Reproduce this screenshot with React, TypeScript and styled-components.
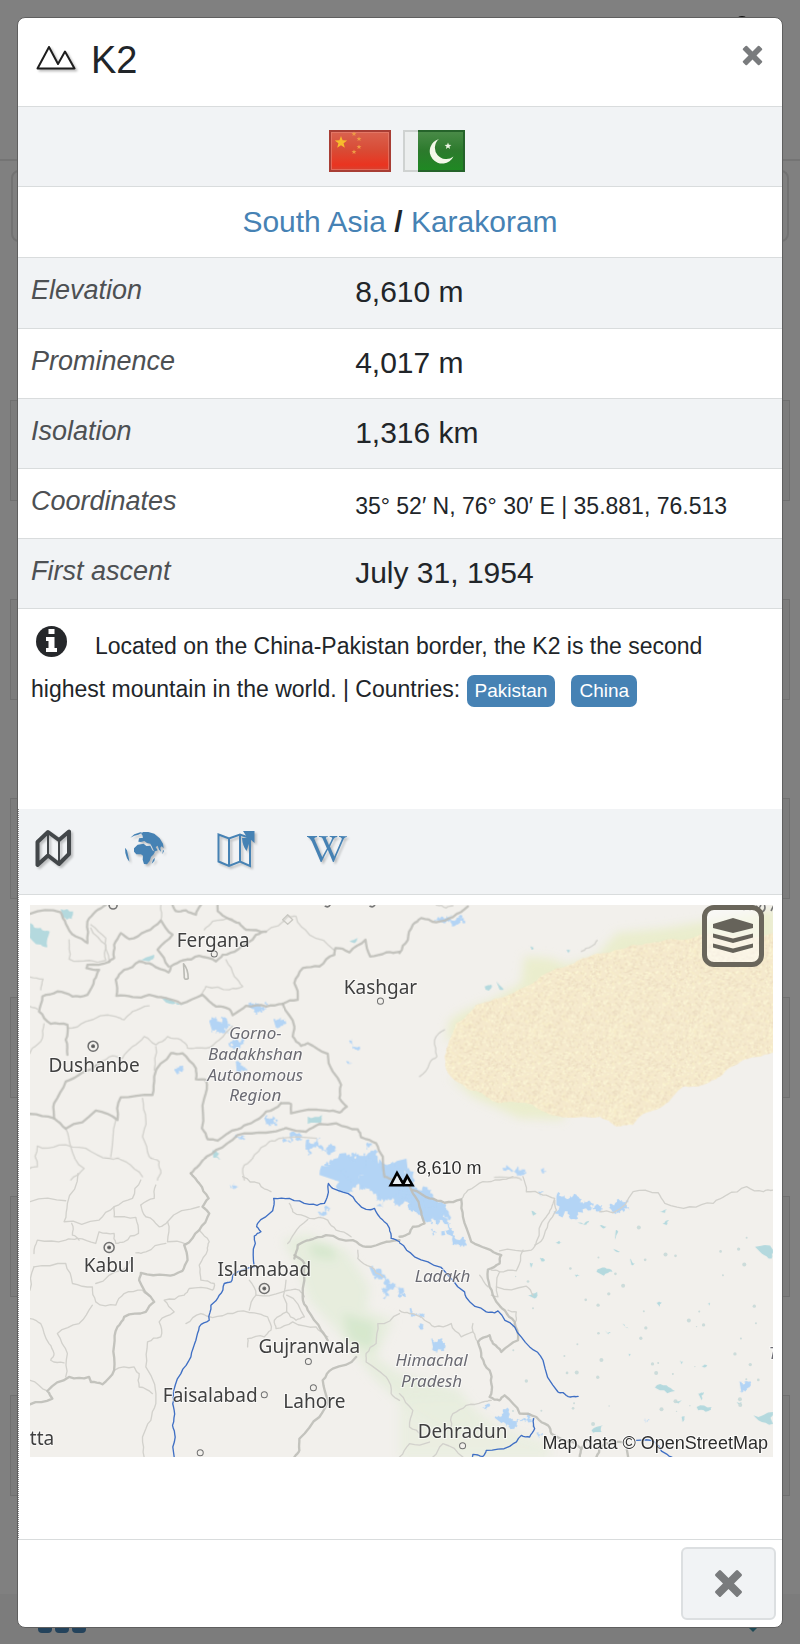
import React from "react";
import styled, { createGlobalStyle, css } from "styled-components";
import { FaWikipediaW } from "react-icons/fa";

const sans = `"Liberation Sans", Arial, sans-serif`;
const mapFont = `"Noto Sans", "Open Sans", sans-serif`;
const color = {
  ink: "#212529",
  muted: "#4d5053",
  link: "#4682b4",
  line: "#d9dcdd",
  stripe: "#f1f3f5",
  cross: "#797b7d",
};

const GlobalStyle = createGlobalStyle`
  *, *::before, *::after { box-sizing: border-box; }
  body { margin: 0; background: #808080; font-family: ${sans}; color: ${color.ink}; }
  a { color: ${color.link}; text-decoration: none; }
  button { font: inherit; cursor: pointer; }
`;

/* ---------- page behind the dialog ---------- */

const Stage = styled.div`
  display: grid;
  grid-template-columns: minmax(0, 1fr);
  min-height: 100vh;
`;

const Behind = styled.div`
  grid-area: 1 / 1;
  display: flex;
  flex-direction: column;
  overflow: hidden;
`;

const BehindBar = styled.div`
  display: flex;
  justify-content: flex-end;
  height: 161px;
  flex: none;
  padding: 15px 54px 0 0;
  border-bottom: 2px solid #747474;
`;

const BehindSearch = styled.div`
  height: 72px;
  flex: none;
  margin: 9px 11px 158px;
  border: 2px solid #727272;
  border-radius: 8px;
`;

const BehindCard = styled.div`
  height: 101px;
  flex: none;
  margin: 0 10px 98px;
  border: 1px solid #707070;
  background: #7c7c7c;
`;

const BehindDock = styled.div`
  display: flex;
  justify-content: space-between;
  align-items: flex-end;
  flex: 1;
  padding: 0 40px 12px 38px;
  background: #7c7c7c;
`;

/* ---------- dialog ---------- */

const Dialog = styled.main`
  grid-area: 1 / 1;
  position: relative;
  display: flex;
  flex-direction: column;
  align-self: start;
  margin: 17px;
  border: 1px solid #5f5f5f;
  border-radius: 8px;
  background: #fff;
  overflow: hidden;
`;

const Header = styled.header`
  display: flex;
  align-items: flex-start;
  padding: 19px 14px 0 18px;
  height: 89px;
  border-bottom: 1px solid ${color.line};
`;

const Title = styled.h1`
  flex: 1;
  margin: 0;
  padding-left: 15px;
  font-size: 38px;
  line-height: 46px;
  font-weight: 400;
`;

const HeaderIcon = styled.div`
  padding-top: 8px;
  line-height: 0;
  filter: drop-shadow(2px 2px 1px rgba(0, 0, 0, 0.25));
`;

const CloseButton = styled.button<{ $large?: boolean }>`
  display: grid;
  place-items: center;
  padding: 0;
  border: 0;
  background: none;
  width: 32px;
  height: 36px;
  color: ${color.cross};
  ${(p) =>
    p.$large &&
    css`
      width: 95px;
      height: 73px;
      border: 2px solid #dcdfe1;
      border-radius: 6px;
      background: ${color.stripe};
    `}
`;

const Flags = styled.div`
  display: flex;
  justify-content: center;
  gap: 11px;
  height: 80px;
  padding: 23px 5px 0 0;
  background: ${color.stripe};
  border-bottom: 1px solid ${color.line};
`;

const Region = styled.h2`
  margin: 0;
  padding: 17px 0;
  font-size: 30px;
  line-height: 36px;
  font-weight: 400;
  text-align: center;
  border-bottom: 1px solid ${color.line};
`;

const Facts = styled.table`
  width: 100%;
  table-layout: fixed;
  border-collapse: collapse;
`;

const FactRow = styled.tr`
  height: 70px;
  border-bottom: 1px solid ${color.line};
  &:nth-child(odd) {
    background: ${color.stripe};
  }
`;

const FactLabel = styled.th`
  width: 44%;
  padding: 16px 0 0 13px;
  vertical-align: top;
  text-align: left;
  font-size: 27px;
  line-height: 32px;
  font-weight: 400;
  font-style: italic;
  color: ${color.muted};
`;

const FactValue = styled.td<{ $small?: boolean }>`
  padding: 16px 0 0 1px;
  vertical-align: top;
  font-size: ${(p) => (p.$small ? 23 : 30)}px;
  line-height: ${(p) => (p.$small ? 42 : 36)}px;
  white-space: nowrap;
`;

const About = styled.p`
  margin: 0;
  min-height: 200px;
  padding: 16px 12px 0 13px;
  font-size: 23px;
  line-height: 43px;
`;

const AboutIcon = styled.svg`
  width: 31px;
  height: 31px;
  margin: 0 28px 0 5px;
  vertical-align: -3px;
`;

const Badge = styled.a`
  display: inline-block;
  margin-right: 16px;
  padding: 0 8px;
  border-radius: 7px;
  background: ${color.link};
  color: #fff;
  font-size: 19px;
  line-height: 32px;
`;

const Maps = styled.section`
  border-left: 1px dotted #8d8d8d;
  border-bottom: 1px solid ${color.line};
`;

const Tabs = styled.nav`
  display: flex;
  gap: 46px;
  height: 86px;
  padding: 16px 0 0 12px;
  background: ${color.stripe};
  border-bottom: 1px solid ${color.line};
`;

const Tab = styled.button<{ $active?: boolean }>`
  display: grid;
  place-items: center;
  width: 45px;
  height: 48px;
  padding: 0;
  border: 0;
  background: none;
  color: ${(p) => (p.$active ? "#43474a" : color.link)};
  filter: drop-shadow(2px 2px 1px rgba(0, 0, 0, 0.22));
`;

const MapFrame = styled.div`
  position: relative;
  margin: 10px 9px 82px 11px;
`;

const MapCanvas = styled.svg`
  display: block;
  width: 100%;
  height: auto;
  background: #f2f0ec;
`;

const LayersButton = styled.button`
  position: absolute;
  top: 0;
  right: 9px;
  display: grid;
  place-items: center;
  width: 62px;
  height: 62px;
  padding: 0;
  border: 5px solid #6a665b;
  border-radius: 12px;
  background: rgba(255, 255, 255, 0.5);
  color: #66635a;
`;

const City = styled.text`
  font: 19px ${mapFont};
  fill: #404040;
  text-anchor: middle;
  paint-order: stroke;
  stroke: rgba(255, 255, 255, 0.6);
  stroke-width: 2px;
`;

const Area = styled(City)`
  font: italic 17px ${mapFont};
  fill: #6a6a72;
`;

const MapNote = styled.text`
  font: 18px ${sans};
  fill: #2c2c2c;
  paint-order: stroke;
  stroke: rgba(255, 255, 255, 0.7);
  stroke-width: 2px;
`;

const Footer = styled.footer`
  display: flex;
  justify-content: flex-end;
  padding: 7px 6px;
`;

/* ---------- icons ---------- */

const Cross = ({ size }: { size: number }) => (
  <svg width={size} height={size} viewBox="0 0 20 20" aria-hidden="true">
    <path
      d="M3.4 1 1 3.4Q.3 4.100 1 4.800L6.200 10 1 15.200Q.3 15.900 1 16.600L3.400 19Q4.100 19.700 4.800 19L10 13.800 15.200 19Q15.900 19.700 16.600 19L19 16.600Q19.700 15.900 19 15.200L13.800 10 19 4.800Q19.700 4.100 19 3.400L16.600 1Q15.900.3 15.200 1L10 6.200 4.800 1Q4.100.3 3.400 1Z"
      fill="currentColor"
    />
  </svg>
);

const Peaks = () => (
  <svg width="40" height="25" viewBox="0 0 40 25" fill="#fff" stroke="#1d1d1d" strokeWidth="2" strokeLinejoin="round" aria-hidden="true">
    <path d="M1.500 23.500 13 2l9 17 7-12.500 9.500 17Z" />
  </svg>
);

const Info = () => (
  <AboutIcon viewBox="0 0 31 31" aria-hidden="true">
    <circle cx="15.500" cy="15.500" r="15.500" fill="#26282b" />
    <path d="M12.500 3h6v5h-6ZM10 11h8.500v11h2.500v4H10v-4h2.500v-7H10Z" fill="#fff" />
  </AboutIcon>
);

const FoldedMap = () => (
  <svg width="37" height="39" viewBox="0 0 37 39" fill="none" stroke="currentColor" aria-hidden="true">
    <path d="M2.500 13 13 3l11 8L34 2.500V25L24 35 13 26.500 2.500 36Z" strokeWidth="4" strokeLinejoin="round" />
    <path d="M13 3v23M24 11v24" strokeWidth="2" />
  </svg>
);

const Globe = () => (
  <svg width="40" height="36" viewBox="0 0 120 108" fill="currentColor" aria-hidden="true">
    <path d="M27 52 38 41 56 38 64 45 76 44 82 58 90 62 86 70 78 78 74 90 66 100 57 99 53 86 54 74 48 70 34 70 27 62Z" />
    <path d="M40 32 42 22 54 20 52 12 48 8 54 3 70 3 88 8 104 22 114 38 116 52 110 46 106 50 108 62 102 56 98 44 92 48 98 58 88 62 80 46 76 38 66 36 58 30 48 33Z" />
    <path d="M16 20 28 10 46 4 52 5 40 11 28 14ZM0 50 6 58 12 84 13 92 6 82 1 66ZM90 80 88 90 80 98 84 86ZM114 56 117 60 112 70Z" />
  </svg>
);

const FlaggedMap = () => (
  <svg width="38" height="38" viewBox="0 0 38 38" fill="none" stroke="currentColor" strokeWidth="2" aria-hidden="true">
    <path d="M1.500 4.500 12 8.500 23 4.500 33 8V36L23 31.500 12 36 1.500 31.500ZM12 8.500V36M23 4.500v27" />
    <path d="M26 1h11.500v12L33.500 9.500Q32 14 29.500 21 25.500 16 25 8h5.500Z" fill="currentColor" stroke="none" />
  </svg>
);

const Layers = () => (
  <svg width="40" height="36" viewBox="0 0 40 36" fill="currentColor" aria-hidden="true">
    <path d="M0 6 20 0 40 6v4L20 15 0 10ZM0 15.500 20 20.500 40 15.500v4L20 25 0 19.500ZM0 25.500 20 30.500 40 25.500v4L20 35 0 29.500Z" />
  </svg>
);

const star = (cx: number, cy: number, r: number) =>
  Array.from({ length: 10 }, (_, i) => {
    const a = (Math.PI / 5) * i - Math.PI / 2;
    const q = i % 2 ? r * 0.42 : r;
    return `${(cx + q * Math.cos(a)).toFixed(2)},${(cy + q * Math.sin(a)).toFixed(2)}`;
  }).join(" ");

const ChinaFlag = () => (
  <svg width="63" height="42" viewBox="0 0 63 42" role="img" aria-label="China">
    <defs>
      <linearGradient id="red" x1="0" y1="0" x2="0" y2="1">
        <stop offset="0" stopColor="#d96350" />
        <stop offset=".5" stopColor="#d94a34" />
        <stop offset=".85" stopColor="#ea3420" />
        <stop offset="1" stopColor="#d24433" />
      </linearGradient>
    </defs>
    <rect x="1" y="1" width="60" height="40" fill="url(#red)" stroke="#a83d34" strokeWidth="2" />
    <rect x="2.500" y="2.500" width="57" height="37" fill="none" stroke="#e98576" strokeOpacity=".6" />
    <polygon points={star(12, 12.5, 6.5)} fill="#f7bb2c" />
    {[[25, 4], [30, 9], [30, 17], [25, 22]].map(([x, y]) => (
      <polygon key={y} points={star(x, y, 2.6)} fill="#ee9a45" />
    ))}
  </svg>
);

const PakistanFlag = () => (
  <svg width="63" height="42" viewBox="0 0 63 42" role="img" aria-label="Pakistan">
    <defs>
      <linearGradient id="green" x1="0" y1="0" x2="0" y2="1">
        <stop offset="0" stopColor="#4c8c4a" />
        <stop offset=".5" stopColor="#2c7a2c" />
        <stop offset="1" stopColor="#1e8a22" />
      </linearGradient>
    </defs>
    <rect x="1" y="1" width="60" height="40" fill="#eceeee" stroke="#cfd2d1" strokeWidth="2" />
    <rect x="15" y="0" width="47" height="42" fill="url(#green)" />
    <path d="M15 1H61V41H15" fill="none" stroke="#25632a" strokeWidth="2" />
    <path d="M36 9a12.500 12.500 0 1 0 14.500 17.500A11 11 0 0 1 36 9Z" fill="#f3f8e8" />
    <polygon points={star(45, 16, 3.6)} fill="#eef5e4" />
  </svg>
);

/* ---------- terrain map ---------- */

let seed = 7;
const rand = () => {
  seed = (seed * 16807) % 2147483647;
  return seed / 2147483647;
};

/** Splits every segment of a polyline and shifts the new points a little, like a surveyed border. */
const rough = (line: string, amount = 0.12, passes = 2) => {
  let pts = line.split(" ").map((p) => p.split(",").map(Number));
  for (let n = 0; n < passes; n++) {
    const next = [pts[0]];
    for (let i = 1; i < pts.length; i++) {
      const [ax, ay] = pts[i - 1];
      const [bx, by] = pts[i];
      const k = (rand() - 0.5) * 2 * amount;
      next.push([(ax + bx) / 2 - (by - ay) * k, (ay + by) / 2 + (bx - ax) * k], pts[i]);
    }
    pts = next;
  }
  return "M" + pts.map(([x, y]) => `${x.toFixed(1)} ${y.toFixed(1)}`).join("L");
};

type Tile = { x: number; y: number; borders: string[]; minor: string[]; ice?: string[]; lakes?: string[] };

const tiles: Tile[] = [
  {
    x: 0,
    y: 0,
    borders: [
      "93,72 185,68 200,102 230,140 265,160 265,95 290,65 320,46",
      "520,46 530,64 560,62 590,75 605,46",
      "655,46 655,64 690,88 720,100 740,120 800,126 770,135 715,180 670,195 650,215 600,198 550,212 515,230 508,248 460,225 420,215 375,240 350,270 352,318 400,322 450,315 500,325 545,342 610,315 650,350 690,358 700,376 740,348 800,350 850,342 895,330 885,280 910,235 960,230 1005,195 1008,175 1050,188 1098,150 1112,200 1160,188 1200,186",
      "330,216 265,225 262,235 300,240 285,270 265,315 220,320 175,305 130,320 120,365 155,402 205,405 200,450 205,495",
      "330,216 345,205 345,165 365,130 390,148 440,125 485,92 520,135 475,180 508,230",
      "850,342 885,410 880,440 905,468 925,460 985,492 1000,545 1025,585 1020,625 1042,650 1020,668 980,662 875,670 875,642 845,640",
      "845,640 800,665 755,700 715,718 655,752 625,748 608,715 615,625 620,570 590,568 590,535 550,490 515,490 465,560 460,615 365,622 355,690 290,662 200,716 165,685 93,672",
      "165,685 165,640 200,575 250,548 300,520",
      "575,850 600,825 650,780 715,735 800,728 920,725 960,702 1010,700 1075,718 1085,742 1130,760 1150,800 1155,860 1180,870",
    ],
    minor: [
      "275,105 320,145 330,216", "485,92 485,46", "93,262 132,268 125,300", "210,150 210,208 270,212 320,212 320,165 275,115",
      "800,126 865,80 890,80 930,135 1005,182", "615,120 640,95 700,88", "680,210 705,260 730,290 690,300 620,290 605,315",
      "205,415 260,395 350,380 375,390 400,365 450,348", "300,520 340,498 370,505 400,470 435,440 470,465 505,440 545,450 565,475 620,475 660,450 700,410",
      "470,470 465,540", "135,402 130,445 100,475 93,490", "200,716 215,770 255,835 215,870", "430,625 440,690 430,740 450,800 480,815 485,850 475,870",
      "93,835 115,830 115,768 180,765 260,775 330,805 380,815 430,860", "350,690 335,800", "735,870 735,825 765,795 810,755 840,745 950,745", "93,350 115,358",
    ],
    ice: [
      "630,395 660,400 668,380 685,395 700,410 690,430 660,432 640,428", "685,455 715,450 735,465 720,475 690,470",
      "745,348 770,338 800,335 800,358 775,372 760,358", "822,388 848,390 850,408 828,408", "920,750 950,755 960,740 985,770 1005,785 965,785 925,795 918,770",
      "975,828 1010,820 1045,795 1065,805 1100,800 1150,825 1190,830 1200,870 1010,870 1015,840", "795,685 820,675 835,690 820,702 800,698",
      "850,740 890,730 900,750 870,757", "710,520 735,530 745,545 712,540", "525,540 550,545 535,555", "1055,445 1062,468 1082,474 1062,475", "1040,515 1060,520 1048,525",
      "710,733 738,738 720,748", "1100,762 1118,768 1105,782",
    ],
    lakes: [
      "93,100 125,115 152,125 145,172 125,165 93,128", "185,58 222,65 218,88 190,85", "415,210 465,195 450,215", "485,322 515,328 558,340 545,345 500,338",
      "640,780 660,790 652,800 665,808 642,803", "925,680 968,675 965,700 925,702", "1050,155 1075,145 1065,160",
    ],
  },
  {
    x: 1200,
    y: 0,
    borders: ["0,190 25,150 40,105 65,85 110,98 160,82 205,50"],
    minor: ["110,46 140,55 160,48", "285,862 350,862 365,870", "135,420 105,450 112,500 90,520 60,560", "545,185 575,170 592,152"],
    ice: ["320,825 355,828 375,838 378,850 350,850", "423,838 440,845 428,850", "105,90 130,82 160,78 198,95 165,94 130,98"],
    lakes: ["255,290 275,285 268,303 258,300", "290,275 312,298 300,300", "500,180 512,182 506,190", "392,170 402,175 396,180"],
  },
  {
    x: 0,
    y: 870,
    borders: [
      "575,-20 600,10 628,55 610,80 630,100 600,150 555,195 565,240 550,272 500,285 425,278 420,300 465,365 440,395 375,410 355,440 345,495 345,570 310,612 275,605 270,590 210,590 145,632 160,655 93,672",
      "885,235 895,195 930,180 980,165 1060,180 1100,200 1160,185 1200,180",
      "885,225 915,250 910,350 925,390 965,450 985,480",
      "1070,530 1000,565 970,600 985,665 960,710 900,775 900,810 885,830",
    ],
    minor: [
      "93,65 200,62", "237,-20 205,70 195,125 300,120 345,80 400,55 425,0", "345,80 345,110 410,112 418,160 375,185 350,190 345,160 300,155 290,190 235,175 200,180 115,180 105,220",
      "425,75 465,55 470,15", "425,75 440,110 480,140 505,125 600,80", "505,125 505,185 560,192", "410,218 440,215 500,190", "105,260 200,250 220,310 280,320 290,365 350,375 375,340 430,330 455,350",
      "290,310 370,270 400,235", "218,130 220,165 240,180", "280,375 240,430 175,460 205,520 200,590", "93,415 125,430 150,490 165,520 155,540 195,548", "93,600 145,632", "105,260 93,330",
      "600,150 630,185 625,210 600,255 605,300 645,310 640,330 570,325 555,345 495,360 525,395 480,425 485,470 445,485 440,560 470,670 455,720 430,770 435,830",
      "345,570 405,560 420,580 420,620 460,640", "730,-10 780,10 815,35", "870,70 880,95 930,115 985,120 1010,150 1055,170", "925,118 885,160 865,190",
      "560,430 605,400 640,412 700,400 765,398 805,410 815,450 795,470 745,475 745,500", "750,390 770,345 750,300", "770,345 850,335 900,330 915,350", "860,300 862,395 890,420 915,410 862,345", "862,395 825,420 830,445 880,425 950,440 985,470",
      "1075,210 1075,235 1115,260 1150,290", "1200,400 1135,430 1130,490 1100,520 1100,545 1160,590 1175,640 1200,660",
    ],
    ice: [
      "690,15 705,8 718,18 705,28", "955,95 985,80 990,95 965,112", "1110,262 1130,270 1160,290 1200,320 1200,350 1150,355 1145,325 1160,315 1120,285",
      "1080,-5 1200,-5 1200,80 1160,60 1130,65 1120,35 1080,30", "960,-15 1080,-15 1080,10 1020,5",
      "1010,-30 1100,-50 1200,-20 1260,30 1310,60 1345,120 1280,95 1230,80 1180,45 1100,25",
    ],
  },
  {
    x: 1200,
    y: 870,
    borders: [
      "0,170 30,160 40,140 75,130 65,95 40,40 20,0", "40,30 90,55 135,68 185,58 190,110 215,185 260,205 305,225 300,250 265,268 270,320 290,365 315,390 345,425 355,480 305,515 280,490 270,465 235,485 245,530 270,570 275,610 270,650 300,660 315,645 360,700 410,710 445,735 455,760 520,785 545,805 560,780",
      "545,805 540,830", "590,830 600,800 640,785 680,785 685,830",
    ],
    minor: [
      "185,58 205,30 250,5 300,0 340,-10", "370,-10 380,35 430,45 465,55 455,85 440,110 410,185 395,210 300,212", "465,60 470,90 445,130 430,175 405,195", "600,95 640,98 700,35 775,38 795,70 870,80 940,70 980,45 1040,20 1090,35 1119,30",
      "240,285 265,320", "275,270 300,275 295,350 275,345", "300,275 350,272 370,210", "290,320 380,318 400,345", "0,390 30,400 75,420 105,440 155,430 185,470 220,455 220,430", "220,455 235,485",
      "325,390 350,395 350,420 340,440", "0,640 40,690 30,740 65,765", "155,740 160,700 200,675 250,665 275,660", "0,830 30,790 90,785", "100,830 130,790 190,830",
    ],
    ice: [
      "0,30 60,45 100,80 140,85 155,130 188,170 180,200 160,190 130,125 100,110 75,130 55,105 30,70 0,50", "470,50 520,48 570,62 605,75 605,100 550,98 510,105 470,75", "635,90 665,60 685,60 660,95 640,100",
      "95,475 130,485 130,512 100,500", "285,712 330,700 340,715 380,700 405,712 395,725 350,728 340,745 305,728", "1018,600 1040,602 1038,630 1022,625", "30,385 75,400 70,412 35,410", "0,325 20,350 0,345",
      "245,680 270,672 262,688", "735,712 748,720 738,730", "55,435 68,432 62,447", "410,758 430,762 418,772", "98,145 112,155 104,165", "415,35 432,38 425,52",
    ],
    lakes: [
      "533,128 568,122 555,134", "600,136 620,140 608,144", "590,275 615,262 638,275 612,287", "385,345 412,335 405,355", "765,622 800,615 825,632 780,630", "890,680 935,680 925,692 895,690",
      "1060,705 1119,695 1119,730 1075,720", "895,640 912,635 905,660", "575,750 610,735 605,755 580,757", "820,660 845,660 835,670", "690,235 705,250 695,255", "1065,200 1119,210 1115,235 1085,220",
      "780,95 800,88 795,98", "788,130 808,120 800,135", "525,283 540,286 530,292", "468,188 488,186 478,192", "648,150 655,155 645,178", "395,92 410,100 400,108", "845,710 855,708 848,725",
      "925,370 930,367 928,377", "840,540 850,545 845,552", "905,557 922,555 912,562", "390,248 400,250 394,265", "420,232 436,240 426,245", "640,206 660,214 645,212", "1010,665 1025,666 1015,672", "686,520 692,522 688,528",
      "770,368 785,366 780,380", "615,450 635,458 625,462", "668,430 688,445 678,442",
    ],
  },
];

const rivers = [
  "525,1700 528,1640 520,1605 525,1560 522,1520 545,1450 575,1400 590,1350 600,1310 630,1290 635,1245 660,1215 675,1180 695,1175 700,1155 765,1130 768,1060 765,1038 785,1025 772,1010 775,1000 820,962 823,925 870,925 930,943 975,940 985,915 987,880 1000,895 1060,920 1100,958 1125,955 1150,990 1170,1015 1175,1045 1200,1055",
  "1200,1058 1245,1100 1325,1132 1395,1205 1400,1222 1460,1265 1485,1268 1495,1262 1545,1310 1590,1370 1630,1410 1675,1505 1690,1507 1712,1520 1735,1518",
  "1415,1705 1420,1692 1450,1698 1460,1680 1530,1668 1565,1635 1590,1640 1605,1615 1602,1585",
  "1910,1650 1965,1655 1985,1682 2016,1700",
];

const specks = Array.from({ length: 60 }, () => [1540 + rand() * 770, 1010 + rand() * 600, 2 + rand() * 4]);
const sand = Array.from({ length: 1500 }, (_, i) => [rand() * 240, rand() * 240, i % 3]);

const capitals = [[63, 141], [79, 342], [234, 383]];
const towns = [[184, 49], [350, 96], [278, 456], [234, 489], [283, 482], [170, 547], [432, 540]];
const cities: [string, number, number][] = [
  ["Fergana", 183, 42], ["Kashgar", 350, 89], ["Dushanbe", 64, 167], ["Kabul", 79, 367], ["Islamabad", 234, 371],
  ["Gujranwala", 279, 447], ["Faisalabad", 180, 496], ["Lahore", 284, 502], ["tta", 12, 539], ["Dehradun", 432, 532],
];
const areas: [string, number, number][] = [
  ["Gorno-", 225, 134], ["Badakhshan", 225, 155], ["Autonomous", 225, 176], ["Region", 225, 196],
  ["Ladakh", 412, 376], ["Himachal", 401, 460], ["Pradesh", 401, 481], ["T", 742, 453],
];

const Terrain = () => (
  <MapCanvas viewBox="0 0 742 552" role="img" aria-label="Map of the area around K2">
    <defs>
      <pattern id="sand" width="240" height="240" patternUnits="userSpaceOnUse">
        <rect width="240" height="240" fill="#f5e9cd" />
        {sand.map(([x, y, k], i) => (
          <rect key={i} x={x.toFixed(0)} y={y.toFixed(0)} width="4" height="4" fill={["#fefad8", "#ead9bd", "#f9efc9"][k]} />
        ))}
      </pattern>
      <filter id="soft" x="-20%" y="-20%" width="140%" height="140%">
        <feGaussianBlur stdDeviation="14" />
      </filter>
    </defs>
    <g transform="scale(.33333) translate(-93 -46)" strokeLinejoin="round" strokeLinecap="round">
      <g filter="url(#soft)">
        <path d="M1565 280 1575 200 1650 205 1700 225 1790 200 1850 130 2000 115 2330 60 2330 200 1600 300 1340 460 1350 390 1400 360 1480 330ZM1350 560 1420 620 1560 685 1690 690 1700 640Z" fill="#eaedcd" />
        <path d="M850 1050 920 1030 1040 1080 1110 1190 1100 1260 1180 1290 1130 1400 1200 1450 1380 1500 1450 1600 1330 1620 1230 1560 1130 1470 1020 1330 930 1230 900 1140Z" fill="#e3ecd9" opacity=".8" />
        <path d="M1030 1270 1130 1300 1120 1380 1050 1350ZM930 1060 1000 1070 1010 1110 940 1100Z" fill="#cfe6c6" opacity=".7" />
        <path d="M1200 1530 1380 1520 1500 1610 1650 1660 1650 1705 1200 1705Z" fill="#e8eddf" opacity=".8" />
      </g>
      <path d={rough("2330,130 2200,140 2100,135 2000,150 1900,165 1810,190 1750,205 1700,230 1640,250 1600,280 1540,310 1430,345 1370,400 1350,450 1335,500 1345,550 1400,595 1460,620 1500,640 1600,645 1680,680 1800,680 1850,710 1900,705 1920,680 2000,640 2050,590 2110,585 2160,560 2230,510 2330,480", 0.08, 3)} fill="url(#sand)" />
      {tiles.map((t) => (
        <g key={`ice-${t.x}-${t.y}`} transform={`translate(${t.x} ${t.y})`}>
          {t.lakes?.map((l) => <path key={l} d={rough(l, 0.25) + "Z"} fill="#b4d9de" />)}
          {t.ice?.map((l) => <path key={l} d={rough(l, 0.6, 4) + "Z"} fill="#b3d4f5" />)}
        </g>
      ))}
      {tiles.map((t) => (
        <g key={`line-${t.x}-${t.y}`} transform={`translate(${t.x} ${t.y})`} fill="none">
          {t.minor.map((l) => <path key={l} d={rough(l, 0.12)} stroke="#d2d1cc" strokeWidth="4" />)}
          {t.borders.map((l) => <path key={l} d={rough(l, 0.1)} stroke="#bebeb8" strokeWidth="7" strokeOpacity=".9" />)}
        </g>
      ))}
      {specks.map(([x, y, r], i) => <circle key={i} cx={x.toFixed(0)} cy={y.toFixed(0)} r={r.toFixed(0)} fill="#bcd3d3" opacity=".7" />)}
      <path d="M553 222q14 16 14 44-14 8-12-10z" fill="none" stroke="#bcbcb6" strokeWidth="5" />
      <path d="M850 90 865 75 880 90 865 104Z" fill="none" stroke="#c9c8c2" strokeWidth="4" />
      {rivers.map((l) => <path key={l} d={rough(l, 0.1)} fill="none" stroke="#3f6fc4" strokeWidth="4" />)}
      <path d="M978 50q10 4 14-4M1112 50q10 4 14-4M330 46a12 12 0 0 0 24 0M2232 60l6-14M2250 60l8-12M2270 50q4 14 12-2M2294 48q4 14-10 20M2314 62l6-12" fill="none" stroke="#777" strokeWidth="5" />
    </g>
    <g fill="#f2f0ec" stroke="#707070">
      {capitals.map(([x, y]) => (
        <g key={x}>
          <circle cx={x} cy={y} r="5" strokeWidth="1.500" />
          <circle cx={x} cy={y} r="1.500" fill="#555" />
        </g>
      ))}
      {towns.map(([x, y]) => <circle key={x} cx={x} cy={y} r="3" />)}
    </g>
    {cities.map(([name, x, y]) => <City key={name} x={x} y={y}>{name}</City>)}
    {areas.map(([name, x, y]) => <Area key={name} x={x} y={y}>{name}</Area>)}
    <path d="M360 280 366.500 267.500 372.500 278 376.500 270.500 382 280Z" fill="#e9eef2" stroke="#000" strokeWidth="2.500" />
    <path d="M369.500 273 373 279 376 273" fill="none" stroke="#000" strokeWidth="2" />
    <MapNote x="386" y="269">8,610 m</MapNote>
    <MapNote x="737" y="543" textAnchor="end">Map data © OpenStreetMap</MapNote>
  </MapCanvas>
);

const facts: [string, string, boolean?][] = [
  ["Elevation", "8,610 m"],
  ["Prominence", "4,017 m"],
  ["Isolation", "1,316 km"],
  ["Coordinates", "35° 52′ N, 76° 30′ E | 35.881, 76.513", true],
  ["First ascent", "July 31, 1954"],
];

export default function App() {
  return (
    <Stage>
      <GlobalStyle />
      <Behind aria-hidden="true">
        <BehindBar>
          <svg width="8" height="4" viewBox="0 0 8 4">
            <path d="M0 3Q0 1 4 1T8 3Z" fill="#111" />
          </svg>
        </BehindBar>
        <BehindSearch />
        {[1, 2, 3, 4, 5, 6].map((n) => <BehindCard key={n} />)}
        <BehindDock>
          <svg width="48" height="12" viewBox="0 0 48 12" fill="#24435c">
            <path d="M0 0h14v8q0 4-4 4H4q-4 0-4-4ZM17 0h14v8q0 4-4 4h-6q-4 0-4-4ZM34 0h14v8q0 4-4 4h-6q-4 0-4-4Z" />
          </svg>
          <svg width="14" height="14" viewBox="0 0 14 14" fill="#1f4a56">
            <path d="M0 6h14L7 13Z" />
          </svg>
        </BehindDock>
      </Behind>
      <Dialog role="dialog" aria-labelledby="peak-name">
        <Header>
          <HeaderIcon><Peaks /></HeaderIcon>
          <Title id="peak-name">K2</Title>
          <CloseButton aria-label="Close"><Cross size={21} /></CloseButton>
        </Header>
        <Flags>
          <ChinaFlag />
          <PakistanFlag />
        </Flags>
        <Region>
          <a href="#south-asia">South Asia</a> <b>/</b> <a href="#karakoram">Karakoram</a>
        </Region>
        <Facts>
          <tbody>
            {facts.map(([label, value, small]) => (
              <FactRow key={label}>
                <FactLabel scope="row">{label}</FactLabel>
                <FactValue $small={small}>{value}</FactValue>
              </FactRow>
            ))}
          </tbody>
        </Facts>
        <About>
          <Info />
          Located on the China-Pakistan border, the K2 is the second highest mountain in the world. | Countries:{" "}
          <Badge href="#pakistan">Pakistan</Badge>
          <Badge href="#china">China</Badge>
        </About>
        <Maps>
          <Tabs>
            <Tab $active aria-label="Map"><FoldedMap /></Tab>
            <Tab aria-label="Globe"><Globe /></Tab>
            <Tab aria-label="External map"><FlaggedMap /></Tab>
            <Tab aria-label="Wikipedia"><FaWikipediaW size={40} /></Tab>
          </Tabs>
          <MapFrame>
            <Terrain />
            <LayersButton aria-label="Map layers"><Layers /></LayersButton>
          </MapFrame>
        </Maps>
        <Footer>
          <CloseButton $large aria-label="Close dialog"><Cross size={29} /></CloseButton>
        </Footer>
      </Dialog>
    </Stage>
  );
}
